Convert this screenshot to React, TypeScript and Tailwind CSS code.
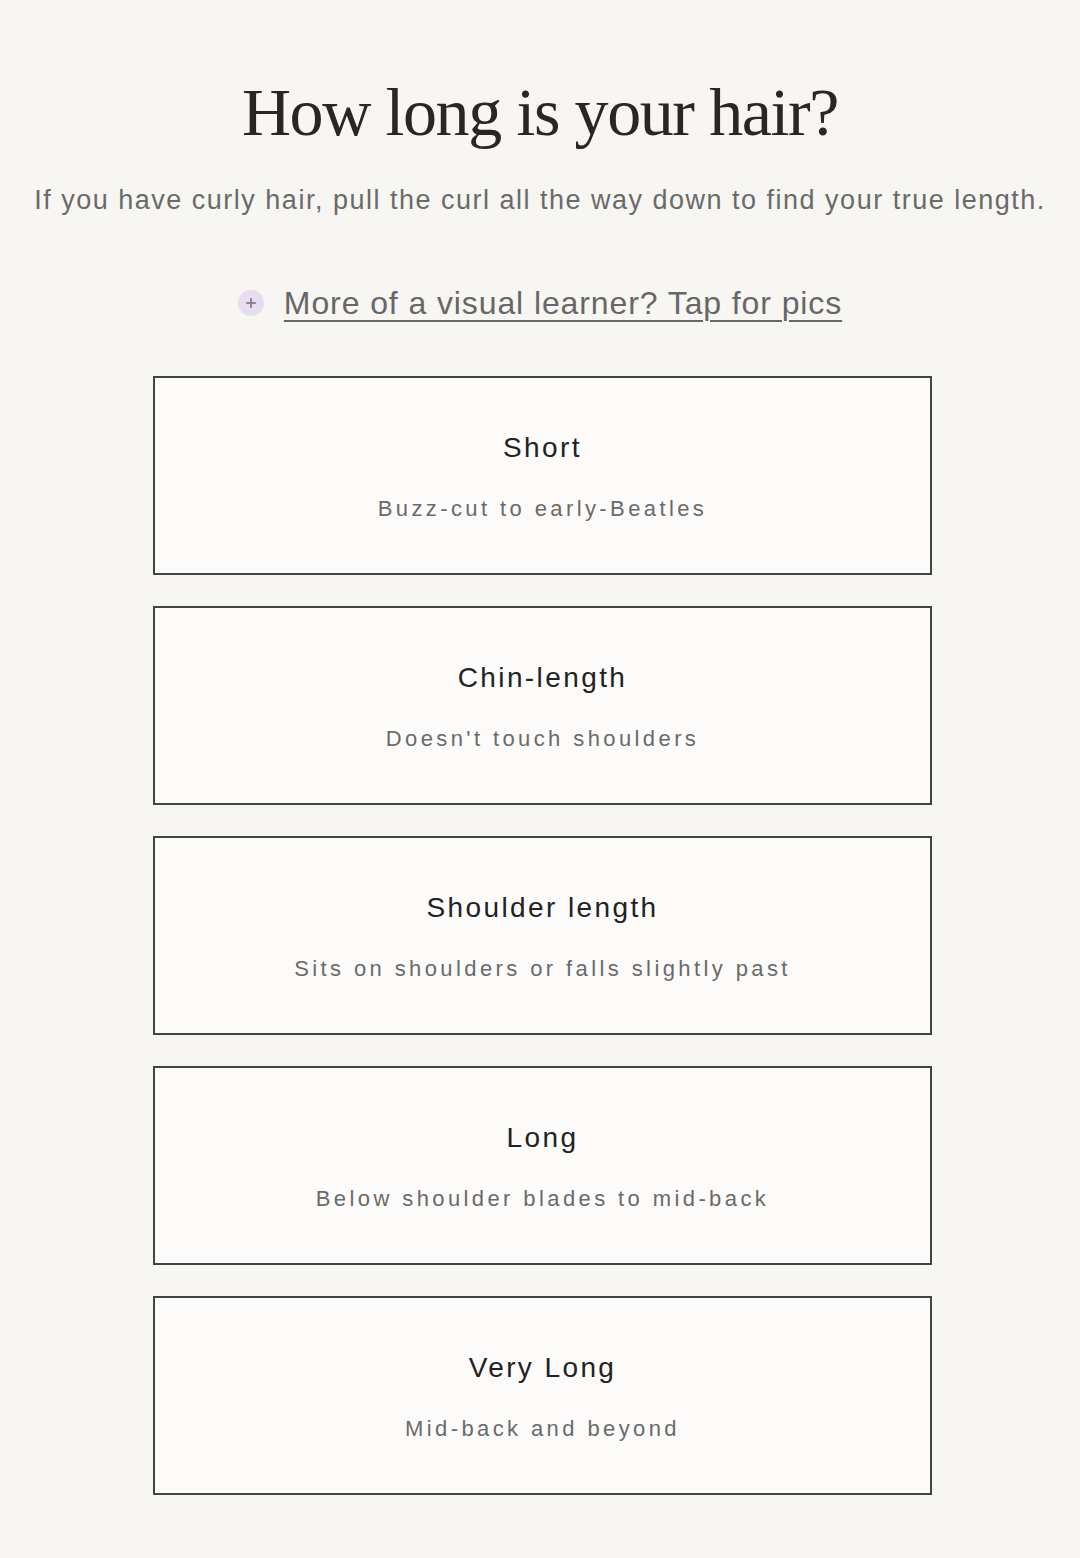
const options = [
  { title: "Short", desc: "Buzz-cut to early-Beatles" },
  { title: "Chin-length", desc: "Doesn't touch shoulders" },
  { title: "Shoulder length", desc: "Sits on shoulders or falls slightly past" },
  { title: "Long", desc: "Below shoulder blades to mid-back" },
  { title: "Very Long", desc: "Mid-back and beyond" },
];

const sans = { fontFamily: '"Liberation Sans", Arial, sans-serif' };

export default function App() {
  return (
    <div className="min-h-[1558px] bg-[#f7f6f2] pt-[68px] pb-[60px]" style={sans}>
      <h1
        className="text-center text-[68px] leading-[88px] tracking-[-1.4px] text-[#2a2622]"
        style={{ fontFamily: '"Liberation Serif", "Times New Roman", serif' }}
      >
        How long is your hair?
      </h1>
      <p className="mt-[24px] text-center text-[27px] leading-[40px] text-[#6a6a6a] tracking-[1.5px]">
        If you have curly hair, pull the curl all the way down to find your true length.
      </p>
      <div className="mt-[62px] flex items-center justify-center gap-[20px]">
        <span className="flex h-[26px] w-[26px] items-center justify-center rounded-full bg-[#e7dcf0]">
          <svg width="12" height="12" viewBox="0 0 12 12">
            <path d="M6 2v8M2 6h8" stroke="#8a8192" strokeWidth="2" strokeLinecap="round" />
          </svg>
        </span>
        <a className="text-[32px] leading-[42px] tracking-[0.9px] text-[#676767] underline underline-offset-[6px] decoration-[2px]">
          More of a visual learner? Tap for pics
        </a>
      </div>
      <div className="ml-[153px] mt-[52px] flex w-[779px] flex-col gap-[31px]">
        {options.map((o) => (
          <button
            key={o.title}
            type="button"
            className="flex h-[199px] flex-col items-center justify-center gap-[31px] border-2 border-[#434343] bg-[#fcfbf9] pt-[4px]"
          >
            <span className="text-[28px] leading-[32px] tracking-[2.4px] text-[#222222]">{o.title}</span>
            <span className="text-[22px] leading-[28px] tracking-[3.4px] text-[#6a6a6a]">{o.desc}</span>
          </button>
        ))}
      </div>
    </div>
  );
}
